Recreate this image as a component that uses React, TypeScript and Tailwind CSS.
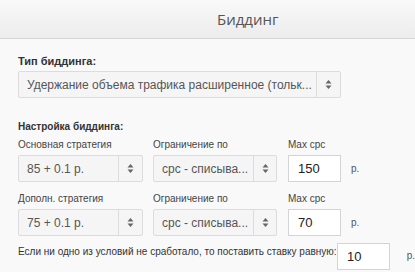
const font = { fontFamily: '"Liberation Sans", Arial, sans-serif' };

function Arrows() {
  return (
    <svg width="7" height="11" viewBox="0 0 7 11" className="block">
      <path d="M3.5 1 L6.5 4.5 L0.5 4.5 Z" fill="#666" />
      <path d="M3.5 10 L6.5 6.5 L0.5 6.5 Z" fill="#666" />
    </svg>
  );
}

function Select({ value, width, textW }: { value: string; width: string; textW: string }) {
  return (
    <div className={`flex h-[27px] ${width} border border-[#dcdcdc] bg-[#f5f5f5] rounded-[2px]`}>
      <div className={`${textW} flex items-center pl-[8px] text-[12px] text-[#555] whitespace-nowrap overflow-hidden`}>{value}</div>
      <div className="flex-1 flex items-center justify-center border-l border-[#dcdcdc]">
        <Arrows />
      </div>
    </div>
  );
}

function Input({ value }: { value: string }) {
  return (
    <div className="h-[27px] w-[53px] border border-[#d4d4d4] bg-white flex items-center pl-[9px] text-[13px] text-[#222]">
      {value}
    </div>
  );
}

function Row({ label, value, max }: { label: string; value: string; max: string }) {
  return (
    <div className="flex items-end">
      <div className="w-[135px]">
        <div className="text-[10px] leading-[12px] text-[#444] mb-[4px]">{label}</div>
        <Select value={value} width="w-[125px]" textW="w-[99px]" />
      </div>
      <div className="w-[135px]">
        <div className="text-[10px] leading-[12px] text-[#444] mb-[4px]">Ограничение по</div>
        <Select value="cpc - списыва..." width="w-[124px]" textW="w-[99px]" />
      </div>
      <div>
        <div className="text-[10px] leading-[12px] text-[#444] mb-[4px]">Max cpc</div>
        <div className="flex items-center">
          <Input value={max} />
          <span className="ml-[10px] text-[10px] text-[#555]">р.</span>
        </div>
      </div>
    </div>
  );
}

export default function App() {
  return (
    <div className="w-[415px] h-[272px] bg-[#f9f9f9] overflow-hidden" style={font}>
      <div className="h-[39px] border-b border-[#d6d6d6] bg-gradient-to-b from-[#f9f9f9] to-[#ececec] flex items-center pl-[217px]">
        <span className="text-[15px] text-[#555]" style={{ fontFamily: '"Open Sans", sans-serif' }}>Биддинг</span>
      </div>
      <div className="pl-[18px] pt-[15px]">
        <div className="text-[11px] font-bold text-[#333] leading-[14px]">Тип биддинга:</div>
        <div className="mt-[3px]">
          <Select value="Удержание объема трафика расширенное (тольк..." width="w-[323px]" textW="w-[297px]" />
        </div>
        <div className="mt-[23px] text-[10px] font-bold text-[#333] leading-[12px]">Настройка биддинга:</div>
        <div className="mt-[6px]">
          <Row label="Основная стратегия" value="85 + 0.1 р." max="150" />
        </div>
        <div className="mt-[11px]">
          <Row label="Дополн. стратегия" value="75 + 0.1 р." max="70" />
        </div>
        <div className="mt-[7px] flex items-start">
          <span className="pt-[3px] text-[10px] leading-[12px] text-[#333] w-[321px] whitespace-nowrap">Если ни одно из условий не сработало, то поставить ставку равную:</span>
          <Input value="10" />
          <span className="ml-[17px] pt-[7px] text-[10px] leading-[12px] text-[#555]">р.</span>
        </div>
      </div>
    </div>
  );
}
